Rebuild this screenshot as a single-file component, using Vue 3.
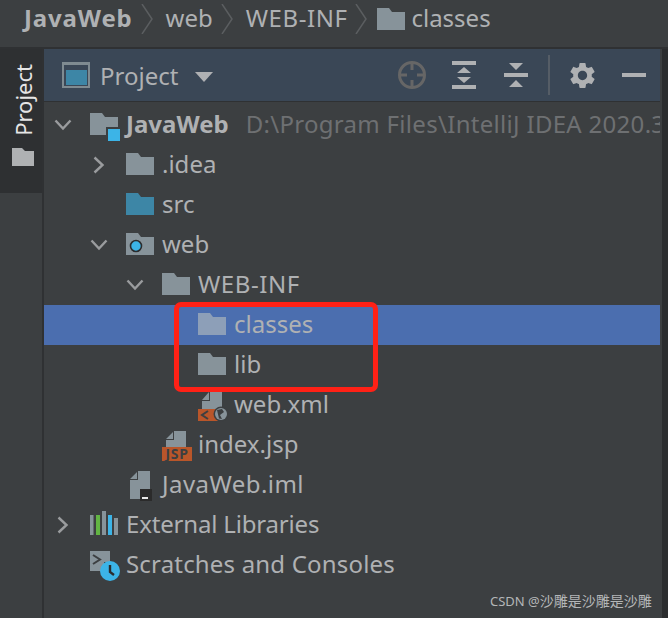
<script setup>
const rows = [
  { name: 'JavaWeb', depth: 0, arrow: 'down', icon: 'module', bold: true, path: 'D:\\Program Files\\IntelliJ IDEA 2020.3' },
  { name: '.idea', depth: 1, arrow: 'right', icon: 'folder' },
  { name: 'src', depth: 1, icon: 'src' },
  { name: 'web', depth: 1, arrow: 'down', icon: 'web' },
  { name: 'WEB-INF', depth: 2, arrow: 'down', icon: 'folder', spacing: 0.55 },
  { name: 'classes', depth: 3, icon: 'folder', selected: true },
  { name: 'lib', depth: 3, icon: 'folder' },
  { name: 'web.xml', depth: 3, icon: 'xml' },
  { name: 'index.jsp', depth: 2, icon: 'jsp' },
  { name: 'JavaWeb.iml', depth: 1, icon: 'iml', spacing: 0.45 },
  { name: 'External Libraries', depth: 0, arrow: 'right', icon: 'libs', spacing: -0.18 },
  { name: 'Scratches and Consoles', depth: 0, icon: 'scratch', spacing: 0.18 }
]
const gear = 'M19.14 12.94c.04-.3.06-.61.06-.94 0-.32-.02-.64-.07-.94l2.03-1.58a.49.49 0 0 0 .12-.61l-1.92-3.32a.488.488 0 0 0-.59-.22l-2.39.96c-.5-.38-1.03-.7-1.62-.94l-.36-2.54a.484.484 0 0 0-.48-.41h-3.84c-.24 0-.43.17-.47.41l-.36 2.54c-.59.24-1.13.57-1.62.94l-2.39-.96c-.22-.08-.47 0-.59.22L2.74 8.87c-.12.21-.08.47.12.61l2.03 1.58c-.05.3-.09.63-.09.94s.02.64.07.94l-2.03 1.58a.49.49 0 0 0-.12.61l1.92 3.32c.12.22.37.29.59.22l2.39-.96c.5.38 1.03.7 1.62.94l.36 2.54c.05.24.24.41.48.41h3.84c.24 0 .44-.17.47-.41l.36-2.54c.59-.24 1.13-.56 1.62-.94l2.39.96c.22.08.47 0 .59-.22l1.92-3.32c.12-.22.07-.47-.12-.61l-2.01-1.58zM12 15.6c-1.98 0-3.6-1.62-3.6-3.6s1.62-3.6 3.6-3.6 3.6 1.62 3.6 3.6-1.62 3.6-3.6 3.6z'
const folder = 'M0 8H12L15 12H28V30H0Z'
</script>

<template>
  <div class="window">
    <div class="crumbs">
      <span class="crumb bold">JavaWeb</span>
      <svg class="sep" width="14" height="30" viewBox="0 0 14 30"><path d="M1 0L11 15L1 30" /></svg>
      <span class="crumb">web</span>
      <svg class="sep" width="14" height="30" viewBox="0 0 14 30"><path d="M1 0L11 15L1 30" /></svg>
      <span class="crumb wide">WEB-INF</span>
      <svg class="sep last" width="14" height="30" viewBox="0 0 14 30"><path d="M1 0L11 15L1 30" /></svg>
      <svg class="crumb-folder" width="28" height="22" viewBox="0 8 28 22"><path :d="folder" fill="#87939a" /></svg>
      <span class="crumb">classes</span>
    </div>

    <div class="main">
      <aside class="stripe">
        <div class="stripe-tab">
          <span class="stripe-label">Project</span>
          <svg class="stripe-folder" width="22" height="18" viewBox="0 0 22 18"><path d="M0 0H10L13 3H22V18H0Z" fill="#afb1b3" /></svg>
        </div>
      </aside>

      <section class="panel">
        <header class="toolbar">
          <svg class="view-icon" width="28" height="26" viewBox="0 0 28 26">
            <rect width="28" height="26" fill="#7f8b91" />
            <rect x="2" y="3" width="24" height="21" fill="#3a4756" />
            <rect x="4" y="8" width="21" height="15" fill="#3d86a6" />
          </svg>
          <span class="view-name">Project</span>
          <svg class="caret" width="18" height="10" viewBox="0 0 18 10"><path d="M0 0H18L9 10Z" fill="#afb1b3" /></svg>
          <div class="tools">
            <svg class="tool-locate" width="28" height="28" viewBox="0 0 28 28">
              <circle cx="14" cy="14" r="12.5" fill="none" stroke="#666666" stroke-width="3" />
              <path d="M14 1V9M14 19V27M1 14H9M19 14H27" stroke="#666666" stroke-width="3" />
            </svg>
            <svg class="tool-expand" width="24" height="28" viewBox="0 0 24 28">
              <path d="M0 0H24V4H0ZM0 24H24V28H0ZM12 6L19 12H5ZM5 16H19L12 22Z" fill="#afb1b3" />
            </svg>
            <svg class="tool-collapse" width="24" height="28" viewBox="0 0 24 28">
              <path d="M0 12H24V16H0ZM5 2H19L12 9ZM12 19L19 26H5Z" fill="#afb1b3" />
            </svg>
            <i class="tool-sep"></i>
            <svg class="tool-gear" width="31" height="31" viewBox="0 0 24 24"><path :d="gear" fill="#afb1b3" fill-rule="evenodd" /></svg>
            <i class="tool-min"></i>
          </div>
        </header>

        <div class="tree">
          <div
            v-for="row in rows"
            :key="row.name"
            class="row"
            :class="{ selected: row.selected }"
            :style="{ paddingLeft: 10 + row.depth * 36 + 'px' }"
          >
            <span class="arrow">
              <svg v-if="row.arrow === 'down'" width="18" height="12" viewBox="0 0 18 12"><path d="M1.5 1.5L9 9.5L16.5 1.5" /></svg>
              <svg v-else-if="row.arrow === 'right'" class="arrow-right" width="12" height="18" viewBox="0 0 12 18"><path d="M1.5 1.5L9.5 9L1.5 16.5" /></svg>
            </span>
            <svg class="icon" width="36" height="40" viewBox="0 0 36 40">
              <path v-if="row.icon === 'folder'" :d="folder" :fill="row.selected ? '#8d9fb8' : '#87939a'" />
              <path v-else-if="row.icon === 'src'" :d="folder" fill="#3d86a6" />
              <template v-else-if="row.icon === 'module'">
                <path :d="folder" fill="#87939a" />
                <rect x="16" y="22" width="16" height="16" fill="#3c3f41" />
                <rect x="18" y="24" width="12" height="12" fill="#3cb4e7" />
              </template>
              <template v-else-if="row.icon === 'web'">
                <path :d="folder" fill="#87939a" />
                <circle cx="10" cy="21" r="5.5" fill="#3cb4e7" stroke="#2b2d2f" stroke-width="1.6" />
              </template>
              <template v-else-if="row.icon === 'xml'">
                <path d="M12 6H24V24H4V16H12ZM4 15L11 7V15Z" fill="#87939a" />
                <rect x="0" y="24" width="20" height="12" fill="#b9562a" />
                <path d="M10 26L4 30L10 34" fill="none" stroke="#3c3f41" stroke-width="2" />
                <circle cx="23" cy="29" r="7.5" fill="#3c3f41" />
                <circle cx="23" cy="29" r="6" fill="#87939a" />
                <path d="M19 25L24 24L26 27L22 30L24 34L21 33.500Z" fill="#3c3f41" />
              </template>
              <template v-else-if="row.icon === 'jsp'">
                <path d="M12 6H24V22H4V15H12ZM4 14L11 7V14Z" fill="#87939a" />
                <rect x="0" y="22" width="30" height="14" fill="#b9562a" />
                <text x="15" y="34" class="badge-text" text-anchor="middle">JSP</text>
              </template>
              <template v-else-if="row.icon === 'iml'">
                <path d="M12 6H24V34H4V15H12ZM4 14L11 7V14Z" fill="#87939a" />
                <rect x="14" y="24" width="12" height="12" fill="#2b2b2b" />
                <rect x="16" y="32" width="6" height="2" fill="#e8e8e8" />
              </template>
              <template v-else-if="row.icon === 'libs'">
                <path d="M0 10H3.500V30H0ZM12 6H16V30H12ZM24 13H28V30H24Z" fill="#87939a" />
                <rect x="6" y="10" width="4" height="20" fill="#62b543" />
                <rect x="18" y="10" width="4" height="20" fill="#3cb4e7" />
              </template>
              <template v-else-if="row.icon === 'scratch'">
                <path d="M0 6H20V17H14V26H0Z" fill="#87939a" />
                <path d="M3 10L10 14.500L3 19" fill="none" stroke="#3c3f41" stroke-width="2" />
                <circle cx="20" cy="26" r="10" fill="#3cb4e7" />
                <path d="M20 20V27L24 30" fill="none" stroke="#2b2d2f" stroke-width="2.400" />
              </template>
            </svg>
            <span
              class="name"
              :class="{ bold: row.bold }"
              :style="{ letterSpacing: (row.spacing || 0) + 'px' }"
            >{{ row.name }}</span>
            <span v-if="row.path" class="path">{{ row.path }}</span>
          </div>
          <div class="highlight"></div>
        </div>
      </section>

      <aside class="edge"></aside>
    </div>
    <span class="watermark"><span class="wm-latin">CSDN @</span>沙雕是沙雕是沙雕</span>
  </div>
</template>

<style scoped>
.window {
  position: relative;
  width: 668px;
  height: 618px;
  overflow: hidden;
  background: #3c3f41;
  color: #afb1b3;
  font-family: "Noto Sans", "Open Sans", sans-serif;
  font-size: 24px;
}
.crumbs {
  height: 47px;
  box-sizing: border-box;
  padding: 0 0 10px 24px;
  display: flex;
  align-items: center;
  box-shadow: 0 2px 0 #2f3133;
  line-height: 32px;
}
.crumb { white-space: nowrap; margin-top: -2px; }
.crumb.wide { letter-spacing: 0.55px; }
.bold { font-weight: 700; letter-spacing: 0.85px; }
.sep { margin: 0 11px 0 8px; flex: none; }
.sep.last { margin-right: 8px; }
.sep path { fill: none; stroke: #5b5e60; stroke-width: 1.500; }
.crumb-folder { margin-right: 6px; flex: none; }
.main {
  display: flex;
  height: 571px;
  margin-top: 2px;
}
.stripe {
  width: 44px;
  flex: none;
  box-sizing: border-box;
  border-right: 2px solid #2f3133;
}
.stripe-tab {
  height: 144px;
  background: #2e3032;
  display: flex;
  flex-direction: column;
  align-items: center;
  padding-top: 15px;
  box-sizing: border-box;
  gap: 12px;
}
.stripe-label {
  writing-mode: vertical-rl;
  transform: rotate(180deg) translateX(-2px);
  color: #e6e6e6;
  font-size: 22px;
  line-height: 24px;
}
.stripe-folder { margin-left: 3px; flex: none; }
.panel {
  width: 616px;
  flex: none;
  display: flex;
  flex-direction: column;
}
.toolbar {
  height: 52px;
  flex: none;
  display: flex;
  align-items: center;
  background: #3a4756;
  border-bottom: 1px solid #2f3133;
  padding-left: 18px;
}
.view-icon { flex: none; margin-right: 10px; }
.view-name { line-height: 32px; margin-top: 2px; }
.caret { margin-left: 17px; flex: none; margin-top: 4px; }
.tools {
  position: absolute;
  left: 398px;
  top: 49px;
  height: 52px;
  display: flex;
  align-items: center;
}
.tool-locate { margin-right: 26px; flex: none; }
.tool-expand { margin-right: 28px; flex: none; }
.tool-collapse { flex: none; }
.tool-sep {
  width: 2px;
  height: 40px;
  background: #555d66;
  margin: 0 20px;
}
.tool-gear { flex: none; margin-right: 24px; margin-left: -3px; }
.tool-min {
  width: 24px;
  height: 4px;
  background: #afb1b3;
}
.tree {
  position: relative;
  flex: 1;
  padding-top: 3px;
  min-height: 0;
}
.row {
  height: 40px;
  display: flex;
  align-items: center;
  white-space: nowrap;
  overflow: hidden;
}
.row.selected { background: #4b6eaf; }
.arrow {
  width: 36px;
  height: 40px;
  flex: none;
  display: flex;
  align-items: center;
}
.arrow svg path {
  fill: none;
  stroke: #9a9c9e;
  stroke-width: 2.400;
}
.arrow-right { margin-left: 3px; }
.icon { flex: none; }
.name { line-height: 40px; margin-top: -2px; }
.path {
  color: #6e7072;
  margin-left: 17px;
  margin-top: -2px;
  line-height: 40px;
  letter-spacing: 0.3px;
}
.badge-text {
  font-family: "Noto Sans", sans-serif;
  font-size: 14px;
  font-weight: 700;
  letter-spacing: 0.6px;
  fill: #3c3f41;
}
.highlight {
  position: absolute;
  left: 130px;
  top: 200px;
  width: 204px;
  height: 90px;
  box-sizing: border-box;
  border: 5px solid #ff2116;
  border-radius: 7px;
}
.edge {
  flex: 1;
  background: #2b2d2f;
  border-left: 2px solid #3c3f41;
}
.watermark {
  position: absolute;
  left: 490px;
  top: 592px;
  font-family: "Noto Sans", "Noto Sans CJK SC", sans-serif;
  font-size: 14px;
  line-height: 18px;
  color: #b4b6b8;
  white-space: nowrap;
}
.wm-latin { font-size: 13px; }
</style>

<style>
html, body { background: #3c3f41; }
</style>
